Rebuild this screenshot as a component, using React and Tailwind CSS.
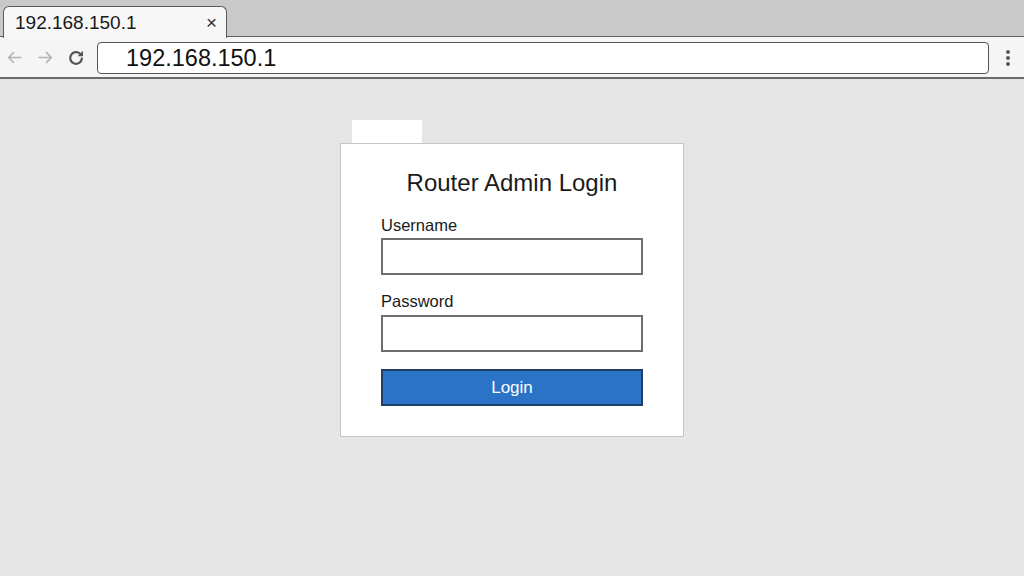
import { useState } from "react";

function BackIcon({ className }) {
  return (
    <svg viewBox="0 0 16 16" className={className} fill="none" stroke="currentColor" strokeWidth="1.6" strokeLinecap="round" strokeLinejoin="round">
      <path d="M14 8H2.5M7 3.5L2.5 8 7 12.5" />
    </svg>
  );
}

function ForwardIcon({ className }) {
  return (
    <svg viewBox="0 0 16 16" className={className} fill="none" stroke="currentColor" strokeWidth="1.6" strokeLinecap="round" strokeLinejoin="round">
      <path d="M2 8h11.5M9 3.5L13.5 8 9 12.5" />
    </svg>
  );
}

function ReloadIcon({ className }) {
  return (
    <svg viewBox="0 0 16 16" className={className} fill="none" stroke="currentColor" strokeWidth="2" strokeLinecap="round">
      <path d="M13.2 8.5a5.2 5.2 0 1 1-1.6-4.3" />
      <path d="M14.2 1.6L14.2 6.4 9.4 6.4Z" fill="currentColor" stroke="none" />
    </svg>
  );
}

export default function App() {
  const [username, setUsername] = useState("");
  const [password, setPassword] = useState("");

  return (
    <div className="w-[1024px] h-[576px] flex flex-col bg-[#e6e6e6] overflow-hidden font-['Liberation_Sans',Arial,sans-serif] text-[#1a1a1a]">
      {/* tab strip */}
      <div className="h-[37px] bg-[#c9c9c9] border-b-[1.5px] border-[#5e5e5e] flex items-end pl-[3px] shrink-0">
        <div className="relative -mb-[2px] w-[224px] h-[32px] bg-[#f7f7f7] border-[1.5px] border-b-0 border-[#5a5a5a] rounded-t-[6px] flex items-center pl-[11px] pr-[9px]">
          <span className="text-[19px] leading-none">192.168.150.1</span>
          <span className="ml-auto text-[19px] leading-none text-[#333]">×</span>
        </div>
      </div>

      {/* toolbar */}
      <div className="h-[42px] bg-[#f5f5f5] border-b-2 border-[#6a6a6a] flex items-center pt-[1px] shrink-0">
        <BackIcon className="w-[17px] h-[17px] ml-[6px] text-[#b5b5b5]" />
        <ForwardIcon className="w-[17px] h-[17px] ml-[14px] text-[#b5b5b5]" />
        <ReloadIcon className="w-[18px] h-[18px] ml-[13px] text-[#555]" />
        <div className="ml-[12px] w-[892px] h-[32px] bg-white border-[1.5px] border-[#555] rounded-[4px] flex items-center pl-[28px]">
          <span className="text-[23.5px] leading-none text-[#111] pt-[2px]">192.168.150.1</span>
        </div>
        <div className="ml-[17px] flex flex-col gap-[2px]">
          <span className="w-[4px] h-[4px] rounded-full bg-[#5a5a5a]" />
          <span className="w-[4px] h-[4px] rounded-full bg-[#5a5a5a]" />
          <span className="w-[4px] h-[4px] rounded-full bg-[#5a5a5a]" />
        </div>
      </div>

      {/* page */}
      <div className="flex-1 flex justify-center pt-[41px]">
        <div className="flex flex-col w-[344px]">
          <div className="ml-[12px] w-[70px] h-[23px] bg-white" />
          <form
            className="bg-white border border-[#c6c6c6] px-[40px] pt-[24px] pb-[30px] flex flex-col"
            onSubmit={(e) => e.preventDefault()}
          >
            <h1 className="text-center text-[24px] leading-[30px] text-[#1a1a1a]">Router Admin Login</h1>

            <label className="mt-[17px] text-[16.5px] leading-[20px]">Username</label>
            <input
              className="mt-[3px] h-[37px] w-[262px] border-2 border-[#6e6e6e] bg-white px-2 outline-none"
              value={username}
              onChange={(e) => setUsername(e.target.value)}
            />

            <label className="mt-[16px] text-[16.5px] leading-[20px]">Password</label>
            <input
              type="password"
              className="mt-[4px] h-[37px] w-[262px] border-2 border-[#6e6e6e] bg-white px-2 outline-none"
              value={password}
              onChange={(e) => setPassword(e.target.value)}
            />

            <button
              type="submit"
              className="mt-[17px] h-[37px] w-[262px] bg-[#2b73c7] border-2 border-[#1f3f66] text-white text-[17px]"
            >
              Login
            </button>
          </form>
        </div>
      </div>
    </div>
  );
}
